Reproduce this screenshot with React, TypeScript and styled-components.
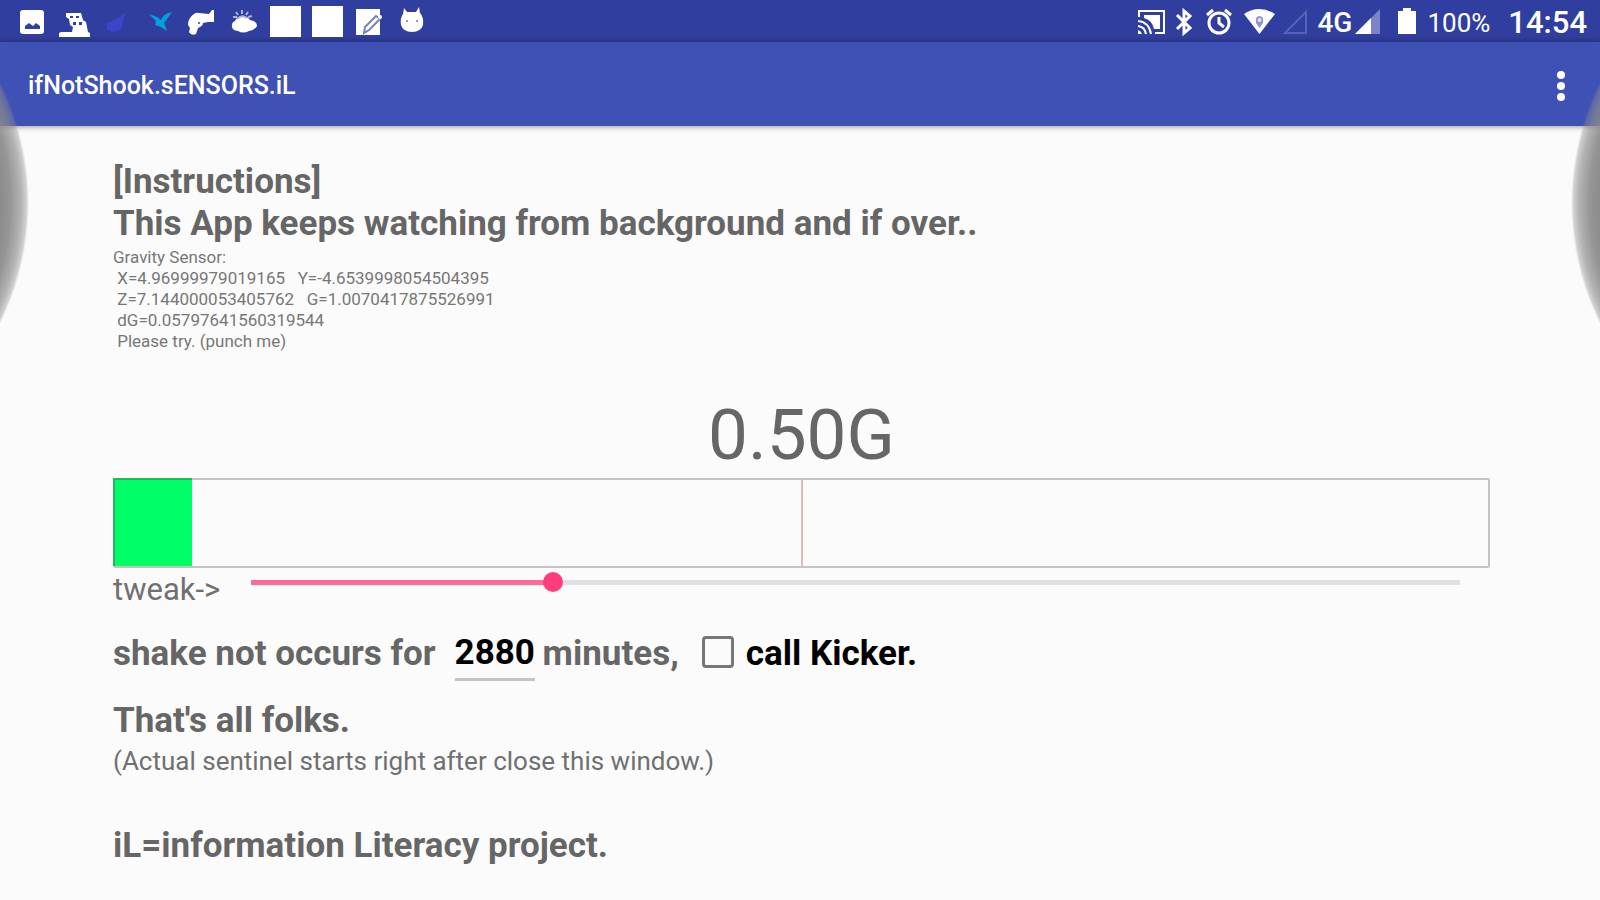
import React, { useState } from "react";
import styled, { createGlobalStyle } from "styled-components";

const GlobalStyle = createGlobalStyle`
  *, *::before, *::after { box-sizing: border-box; }
  body {
    margin: 0;
    background: #fbfbfb;
    color: #666;
    font-family: Roboto, "Liberation Sans", sans-serif;
  }
`;

const Screen = styled.div`
  position: relative;
  min-height: 100vh;
  overflow: hidden;
`;

const StatusBar = styled.header`
  display: flex;
  align-items: center;
  justify-content: space-between;
  height: 42px;
  padding: 0 13px 0 11px;
  background: linear-gradient(#303f9f 36px, #2c3990 42px);
  color: #fff;
`;

const Notifications = styled.div`
  display: flex;
`;

const Indicators = styled.div`
  display: flex;
  align-items: center;
  height: 42px;
`;

const Slot = styled.svg`
  display: block;
  width: 42px;
  height: 42px;
  flex: none;
`;

const Indicator = styled.svg<{ $width: number; $gap?: number }>`
  display: block;
  flex: none;
  width: ${(p) => p.$width}px;
  height: 42px;
  margin-left: ${(p) => p.$gap ?? 0}px;
`;

const StatusText = styled.span<{ $size: number; $gap: number; $weight?: number }>`
  margin-left: ${(p) => p.$gap}px;
  font-size: ${(p) => p.$size}px;
  font-weight: ${(p) => p.$weight ?? 400};
  line-height: 42px;
  padding-top: 4px;
`;

const AppBar = styled.div`
  display: flex;
  align-items: center;
  justify-content: space-between;
  height: 84px;
  padding: 4px 24px 0 28px;
  background: #3f51b5;
  color: #fff;
  box-shadow: 0 1px 5px rgba(0, 0, 0, 0.4);
`;

const Title = styled.h1`
  margin: 0;
  font-size: 25px;
  font-weight: 500;
  line-height: 32px;
`;

const MenuButton = styled.button`
  display: grid;
  place-items: center;
  width: 30px;
  height: 48px;
  padding: 0;
  border: 0;
  background: none;
  color: #fff;
  cursor: pointer;
`;

const EdgeGlow = styled.div<{ $side: "left" | "right" }>`
  position: absolute;
  top: 78px;
  ${(p) => p.$side}: 0;
  width: 29px;
  height: 250px;
  pointer-events: none;
  background: radial-gradient(
    circle 271px at ${(p) => (p.$side === "left" ? "-242px" : "271px")} 50%,
    rgba(134, 134, 134, 0.96) 89%,
    rgba(138, 138, 138, 0.9) 93%,
    rgba(140, 140, 140, 0.65) 97%,
    rgba(140, 140, 140, 0.4) 99%,
    rgba(140, 140, 140, 0) 100%
  );
`;

const Content = styled.main`
  padding: 35px 110px 32px 113px;
`;

const Heading = styled.p`
  margin: 0;
  font-size: 35px;
  font-weight: 700;
  line-height: 42px;
`;

const Readings = styled.div`
  margin-top: 2px;
  color: #777;
  font-size: 17px;
  line-height: 21px;
  white-space: pre-wrap;
`;

const Threshold = styled.output`
  display: block;
  margin-top: 40px;
  font-size: 71px;
  line-height: 86px;
  text-align: center;
`;

const Meter = styled.div`
  position: relative;
  height: 90px;
  border: 2px solid #c4c4c4;
  border-radius: 2px;
`;

const MeterFill = styled.div`
  height: 100%;
  background: #00ff66;
  box-shadow: -2px 0 #28b45c, 0 -2px #28b45c, -2px -2px #28b45c;
`;

const MeterMark = styled.div`
  position: absolute;
  top: 0;
  bottom: 0;
  left: 50%;
  width: 2px;
  margin-left: -1px;
  background: #dcbcbc;
`;

const TweakRow = styled.div`
  display: flex;
  align-items: flex-start;
  padding-right: 20px;
`;

const TweakLabel = styled.label`
  width: 128px;
  color: #707070;
  font-size: 31px;
  line-height: 44px;
`;

const Slider = styled.input`
  appearance: none;
  flex: 1;
  min-width: 0;
  height: 28px;
  margin: 0;
  background:
    linear-gradient(#ff6a98, #ff6a98) 10px 50% / calc((100% - 20px) * var(--level)) 5px no-repeat,
    linear-gradient(#e0e0e0, #e0e0e0) 10px 50% / calc(100% - 20px) 5px no-repeat;
  cursor: pointer;

  &::-webkit-slider-thumb {
    appearance: none;
    width: 20px;
    height: 20px;
    border-radius: 50%;
    background: #ff3d7c;
  }
`;

const RuleRow = styled.div`
  display: flex;
  align-items: center;
  margin-top: 15px;
  font-size: 35px;
  font-weight: 700;
  line-height: 42px;
`;

const Minutes = styled.input`
  width: 80px;
  height: 54px;
  margin: 0 8px 0 19px;
  padding: 0;
  border: 0;
  border-bottom: 3px solid #c4c4c4;
  background: none;
  color: #000;
  font: inherit;
`;

const KickerLabel = styled.label`
  display: flex;
  align-items: center;
  gap: 12px;
  margin-left: 23px;
  color: #000;
`;

const Checkbox = styled.input`
  appearance: none;
  width: 32px;
  height: 32px;
  margin: 0 0 4px;
  border: 3px solid #777;
  border-radius: 4px;

  &:checked { background: #ff3d7c; }
`;

const Note = styled.p`
  margin: 0 0 45px;
  color: #707070;
  font-size: 26px;
  line-height: 38px;
`;

const Closing = styled.section`
  margin-top: 19px;
`;

function NotificationIcons() {
  return (
    <Notifications aria-hidden="true">
      <Slot viewBox="0 0 42 42">
        <rect x="9" y="10" width="24" height="24" rx="3" fill="#fff" />
        <path d="M14 29V26L18 23L22 26L25 23L29 26V29Z" fill="#303f9f" />
      </Slot>
      <Slot viewBox="0 0 42 42" fill="#fff">
        <path d="M13 13H28L30 20L33 22L35 32L37 33V37H6V33L8 32H19L20 27L17 25L16 19L13 17Z" />
        <path d="M17 16h3v2h-3zM23 16h3v2h-3zM20 22h3v3h-3zM26 22h3v3h-3z" fill="#303f9f" />
      </Slot>
      <Slot viewBox="0 0 42 42">
        <path d="M12 23L20 20L31 12L28 20L27 27Q25 32 17 32L12 29Z" fill="#3b45c8" />
      </Slot>
      <Slot viewBox="0 0 42 42">
        <path d="M12 14L20 17L24 20Q27 13 35 12L30 19L27 23L30 31L24 27L18 25L19 21Z" fill="#03a0e0" />
      </Slot>
      <Slot viewBox="0 0 42 42">
        <path d="M15 14Q17 12 20 13L30 14L33 10H35V22H29L24 23Q24 26 19 28L17 34Q12 36 10 32L11 28L9 25Q9 18 15 14Z" fill="#fff" />
        <circle cx="20" cy="23" r="1" fill="#303f9f" />
      </Slot>
      <Slot viewBox="0 0 42 42">
        <path d="M14 21a8 6 0 0 1 15-1Q36 21 36 26Q34 30 28 31Q22 34 17 31Q10 30 11 25Q11 22 14 21Z" fill="#fff" />
        <path d="M21 10v4M27 12l-2 3M15 12l2 3M12 17h4M31 16l-4 1" stroke="#aab1dd" strokeWidth="2" />
        <path d="M16 19q5-5 10-1" fill="none" stroke="#aab1dd" strokeWidth="2" />
      </Slot>
      <Slot viewBox="0 0 42 42"><rect x="7" y="6" width="31" height="31" fill="#fff" /></Slot>
      <Slot viewBox="0 0 42 42"><rect x="7" y="6" width="31" height="31" fill="#fff" /></Slot>
      <Slot viewBox="0 0 42 42">
        <rect x="9" y="9" width="24" height="26" fill="#fff" />
        <path d="M17 33L18 27L29 16L33 19L22 30Z" fill="#fff" stroke="#7680c4" strokeWidth="2" />
        <circle cx="33" cy="17" r="2" fill="#fff" />
      </Slot>
      <Slot viewBox="0 0 42 42">
        <path d="M15 8L18 12H27L30 7L31 13Q35 17 34 25Q32 32 23 32Q14 32 12 25Q11 18 14 14Z" fill="#fff" />
        <circle cx="18" cy="21" r="1" fill="#6670b8" />
        <circle cx="28" cy="21" r="1" fill="#6670b8" />
      </Slot>
    </Notifications>
  );
}

function StatusIndicators() {
  return (
    <Indicators>
      <Indicator $width={29} viewBox="0 0 29 42" fill="none" stroke="#fff" strokeWidth="2">
        <path d="M2 17V11H27V33H18" />
        <path d="M7 15H23V29H17Q15 20 7 18Z" fill="#fff" stroke="none" />
        <path d="M1 21Q12 22 14 34M1 26Q8 27 9 34" />
        <path d="M1 30Q4 31 5 34H1Z" fill="#fff" stroke="none" />
      </Indicator>
      <Indicator $width={18} $gap={9} viewBox="0 0 18 42" fill="none" stroke="#fff" strokeWidth="3">
        <path d="M2 15L15 28L9 33V11L15 16L2 29" />
      </Indicator>
      <Indicator $width={26} $gap={13} viewBox="0 0 26 42" fill="none" stroke="#fff" strokeWidth="3">
        <circle cx="13" cy="23" r="10" />
        <path d="M1 15L7 10M25 15L19 10M13 17V23L18 27" />
      </Indicator>
      <Indicator $width={31} $gap={12} viewBox="0 0 31 42">
        <path d="M0 14Q15 4 31 14L15.500 34Z" fill="#fff" />
        <path d="M12 18Q15 14 19 18V23L15.500 28L12 23Z" fill="#8d95c9" />
        <circle cx="15.500" cy="20" r="2" fill="#dfe2f5" />
      </Indicator>
      <Indicator $width={25} $gap={8} viewBox="0 0 25 42">
        <path d="M2 33L23 12V33Z" fill="none" stroke="#5662b3" strokeWidth="2" />
      </Indicator>
      <StatusText $size={28} $gap={9} $weight={500}>4G</StatusText>
      <Indicator $width={26} $gap={3} viewBox="0 0 26 42">
        <path d="M0 34L25 9V34Z" fill="#7a84c6" />
        <path d="M0 34L16 18V34Z" fill="#fff" />
      </Indicator>
      <Indicator $width={18} $gap={17} viewBox="0 0 18 42">
        <path d="M0 11H5V8H13V11H18V34H0Z" fill="#fff" />
      </Indicator>
      <StatusText $size={26} $gap={11}>100%</StatusText>
      <StatusText $size={31} $gap={18} $weight={500}>14:54</StatusText>
    </Indicators>
  );
}

export default function App() {
  const [level, setLevel] = useState(25);
  const [minutes, setMinutes] = useState("2880");
  const [kicker, setKicker] = useState(false);

  return (
    <>
      <GlobalStyle />
      <Screen>
        <StatusBar>
          <NotificationIcons />
          <StatusIndicators />
        </StatusBar>
        <AppBar>
          <Title>ifNotShook.sENSORS.iL</Title>
          <MenuButton type="button" aria-label="More options">
            <svg width="10" height="32" viewBox="0 0 10 32" fill="#fff">
              <circle cx="5" cy="5" r="4" />
              <circle cx="5" cy="16" r="4" />
              <circle cx="5" cy="27" r="4" />
            </svg>
          </MenuButton>
        </AppBar>
        <Content>
          <Heading>[Instructions]</Heading>
          <Heading>This App keeps watching from background and if over..</Heading>
          <Readings>
            {"Gravity Sensor:\n X=4.96999979019165   Y=-4.6539998054504395\n Z=7.144000053405762   G=1.0070417875526991\n dG=0.05797641560319544\n Please try. (punch me)"}
          </Readings>
          <Threshold htmlFor="tweak">0.50G</Threshold>
          <Meter>
            <MeterFill style={{ width: "5.6%" }} />
            <MeterMark />
          </Meter>
          <TweakRow>
            <TweakLabel htmlFor="tweak">tweak-&gt;</TweakLabel>
            <Slider
              id="tweak"
              type="range"
              min={0}
              max={100}
              value={level}
              onChange={(e) => setLevel(Number(e.target.value))}
              style={{ "--level": level / 100 } as React.CSSProperties}
            />
          </TweakRow>
          <RuleRow>
            <label htmlFor="minutes">shake not occurs for</label>
            <Minutes id="minutes" type="text" inputMode="numeric" value={minutes} onChange={(e) => setMinutes(e.target.value)} />
            <span>minutes,</span>
            <KickerLabel>
              <Checkbox type="checkbox" checked={kicker} onChange={(e) => setKicker(e.target.checked)} />
              call Kicker.
            </KickerLabel>
          </RuleRow>
          <Closing>
            <Heading>That's all folks.</Heading>
            <Note>(Actual sentinel starts right after close this window.)</Note>
            <Heading>iL=information Literacy project.</Heading>
          </Closing>
        </Content>
        <EdgeGlow $side="left" />
        <EdgeGlow $side="right" />
      </Screen>
    </>
  );
}
